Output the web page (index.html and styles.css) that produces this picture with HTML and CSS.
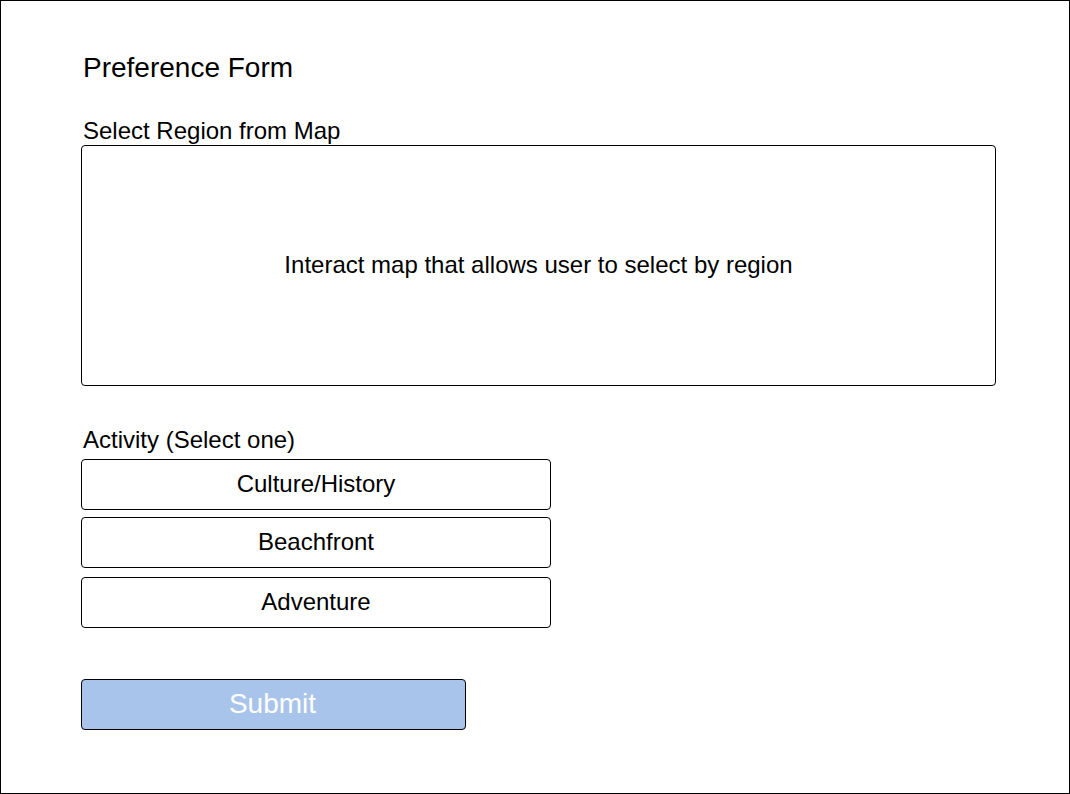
FILE: index.html
```html
<!DOCTYPE html>
<html lang="en">
<head>
<meta charset="utf-8">
<title>Preference Form</title>
<link rel="stylesheet" href="styles.css">
</head>
<body>
<div class="frame">
  <h1 class="title">Preference Form</h1>
  <div class="label label-map">Select Region from Map</div>
  <div class="map">Interact map that allows user to select by region</div>
  <div class="label label-activity">Activity (Select one)</div>
  <div class="options">
    <button class="option option-1" type="button">Culture/History</button>
    <button class="option option-2" type="button">Beachfront</button>
    <button class="option option-3" type="button">Adventure</button>
  </div>
  <button class="submit" type="button">Submit</button>
</div>
</body>
</html>
```

FILE: styles.css
```css
* {
  box-sizing: border-box;
}

html, body {
  margin: 0;
  padding: 0;
  background: #ffffff;
}

body {
  font-family: "Liberation Sans", Arial, Helvetica, sans-serif;
  color: #000000;
}

.frame {
  width: 1070px;
  height: 794px;
  border: 1px solid #000000;
  padding: 51px 0 0 80px;
  display: flex;
  flex-direction: column;
  align-items: flex-start;
}

.title {
  margin: 0;
  padding-left: 2px;
  font-size: 28px;
  line-height: 32px;
  font-weight: normal;
}

.label {
  padding-left: 2px;
  font-size: 24px;
  line-height: 28px;
}

.label-map {
  margin-top: 33px;
}

.map {
  width: 915px;
  height: 241px;
  padding-bottom: 1px;
  border: 1px solid #000000;
  border-radius: 4px;
  display: flex;
  align-items: center;
  justify-content: center;
  font-size: 24px;
  line-height: 28px;
}

.label-activity {
  margin-top: 40px;
}

.options {
  display: flex;
  flex-direction: column;
  margin-top: 5px;
}

.option {
  width: 470px;
  height: 51px;
  margin: 0;
  padding: 0 0 2px 0;
  border: 1px solid #000000;
  border-radius: 4px;
  background: #ffffff;
  color: #000000;
  font-family: "Liberation Sans", Arial, Helvetica, sans-serif;
  font-size: 24px;
  line-height: 28px;
  text-align: center;
}

.option-2 {
  margin-top: 7px;
}

.option-3 {
  margin-top: 9px;
}

.submit {
  margin-top: 51px;
  width: 385px;
  height: 51px;
  padding: 0 2px 2px 0;
  border: 1px solid #000000;
  border-radius: 4px;
  background: #a9c4eb;
  color: #ffffff;
  font-family: "Liberation Sans", Arial, Helvetica, sans-serif;
  font-size: 28px;
  line-height: 32px;
  text-align: center;
}
```
